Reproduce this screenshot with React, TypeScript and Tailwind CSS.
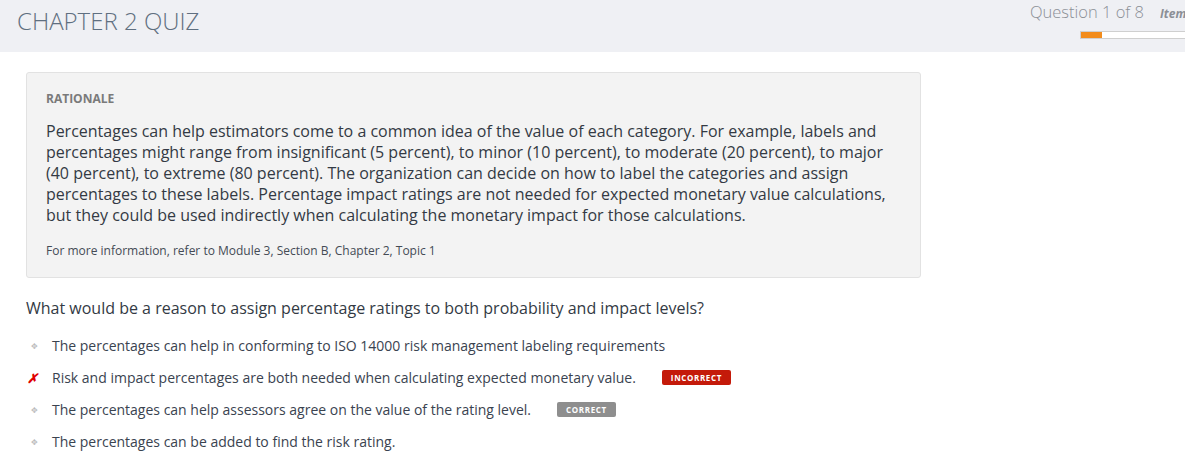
import React from 'react';

const options = [
  { text: 'The percentages can help in conforming to ISO 14000 risk management labeling requirements', mark: 'none' },
  { text: 'Risk and impact percentages are both needed when calculating expected monetary value.', mark: 'wrong', badge: 'INCORRECT' },
  { text: 'The percentages can help assessors agree on the value of the rating level.', mark: 'none', badge: 'CORRECT' },
  { text: 'The percentages can be added to find the risk rating.', mark: 'none' },
];

const Bullet: React.FC<{ mark: string }> = ({ mark }) => {
  if (mark === 'wrong') {
    return <span className="w-[26px] pl-[1px] text-[13px] font-bold italic text-[#e00000] leading-none">✗</span>;
  }
  return (
    <span className="w-[26px] pl-[5px] flex items-center">
      <span className="text-[8px] leading-none text-[#bbbbbb]">✥</span>
    </span>
  );
};

export default function App() {
  return (
    <div className="w-[1185px] h-[461px] overflow-hidden bg-white font-['Open_Sans',sans-serif]">
      {/* Header */}
      <div className="h-[52px] bg-[#eff0f4] flex justify-between">
        <h1 className="pl-[17px] pt-[3px] text-[24px] font-light text-[#5f6f80] leading-[36px]">CHAPTER 2 QUIZ</h1>
        <div className="flex flex-col items-end">
          <div className="flex items-baseline pt-[1px] whitespace-nowrap">
            <span className="text-[16.5px] font-light text-[#8b8f96] leading-[22px]">Question 1 of 8</span>
            <span className="ml-[16px] w-[25px] overflow-hidden text-[12px] font-bold italic text-[#8b8f96]">Items</span>
          </div>
          <div className="mt-[8px] w-[105px] h-[8px] border border-[#cfcfcf] border-r-0 bg-white">
            <div className="h-full w-[21px] bg-[#f28c1c]" />
          </div>
        </div>
      </div>

      <div className="pl-[26px] pt-[20px]">
        {/* Rationale */}
        <div className="w-[895px] bg-[#f3f3f3] border border-[#e2e2e2] rounded-[3px] pl-[19px] pr-[18px] pt-[17px] pb-[17px]">
          <div className="text-[12px] font-bold text-[#7a7a7a] leading-[18px]">RATIONALE</div>
          <p className="mt-[13px] text-[16px] text-[#333a44] leading-[21px]">
            Percentages can help estimators come to a common idea of the value of each category. For example, labels and percentages might range from insignificant (5 percent), to minor (10 percent), to moderate (20 percent), to major (40 percent), to extreme (80 percent). The organization can decide on how to label the categories and assign percentages to these labels. Percentage impact ratings are not needed for expected monetary value calculations, but they could be used indirectly when calculating the monetary impact for those calculations.
          </p>
          <p className="mt-[16px] text-[12px] text-[#444b55] leading-[18px]">
            For more information, refer to Module 3, Section B, Chapter 2, Topic 1
          </p>
        </div>

        {/* Question */}
        <p className="mt-[19px] text-[16px] text-[#333a44] leading-[22px]">
          What would be a reason to assign percentage ratings to both probability and impact levels?
        </p>

        <ul className="mt-[11px] flex flex-col">
          {options.map((o) => (
            <li key={o.text} className="h-[32px] flex items-center">
              <Bullet mark={o.mark} />
              <span className="text-[14px] text-[#3a4350] leading-[20px]">{o.text}</span>
              {o.badge && (
                <span
                  className={
                    o.badge === 'INCORRECT'
                      ? 'ml-[26px] -mt-[1px] h-[15px] px-[9px] rounded-[2px] bg-[#c41a0a] text-white text-[8px] font-bold tracking-[0.08em] leading-[15px]'
                      : 'ml-[26px] -mt-[1px] h-[15px] px-[9px] rounded-[2px] bg-[#8e8e8e] text-white text-[8px] font-bold tracking-[0.08em] leading-[15px]'
                  }
                >
                  {o.badge}
                </span>
              )}
            </li>
          ))}
        </ul>
      </div>
    </div>
  );
}
